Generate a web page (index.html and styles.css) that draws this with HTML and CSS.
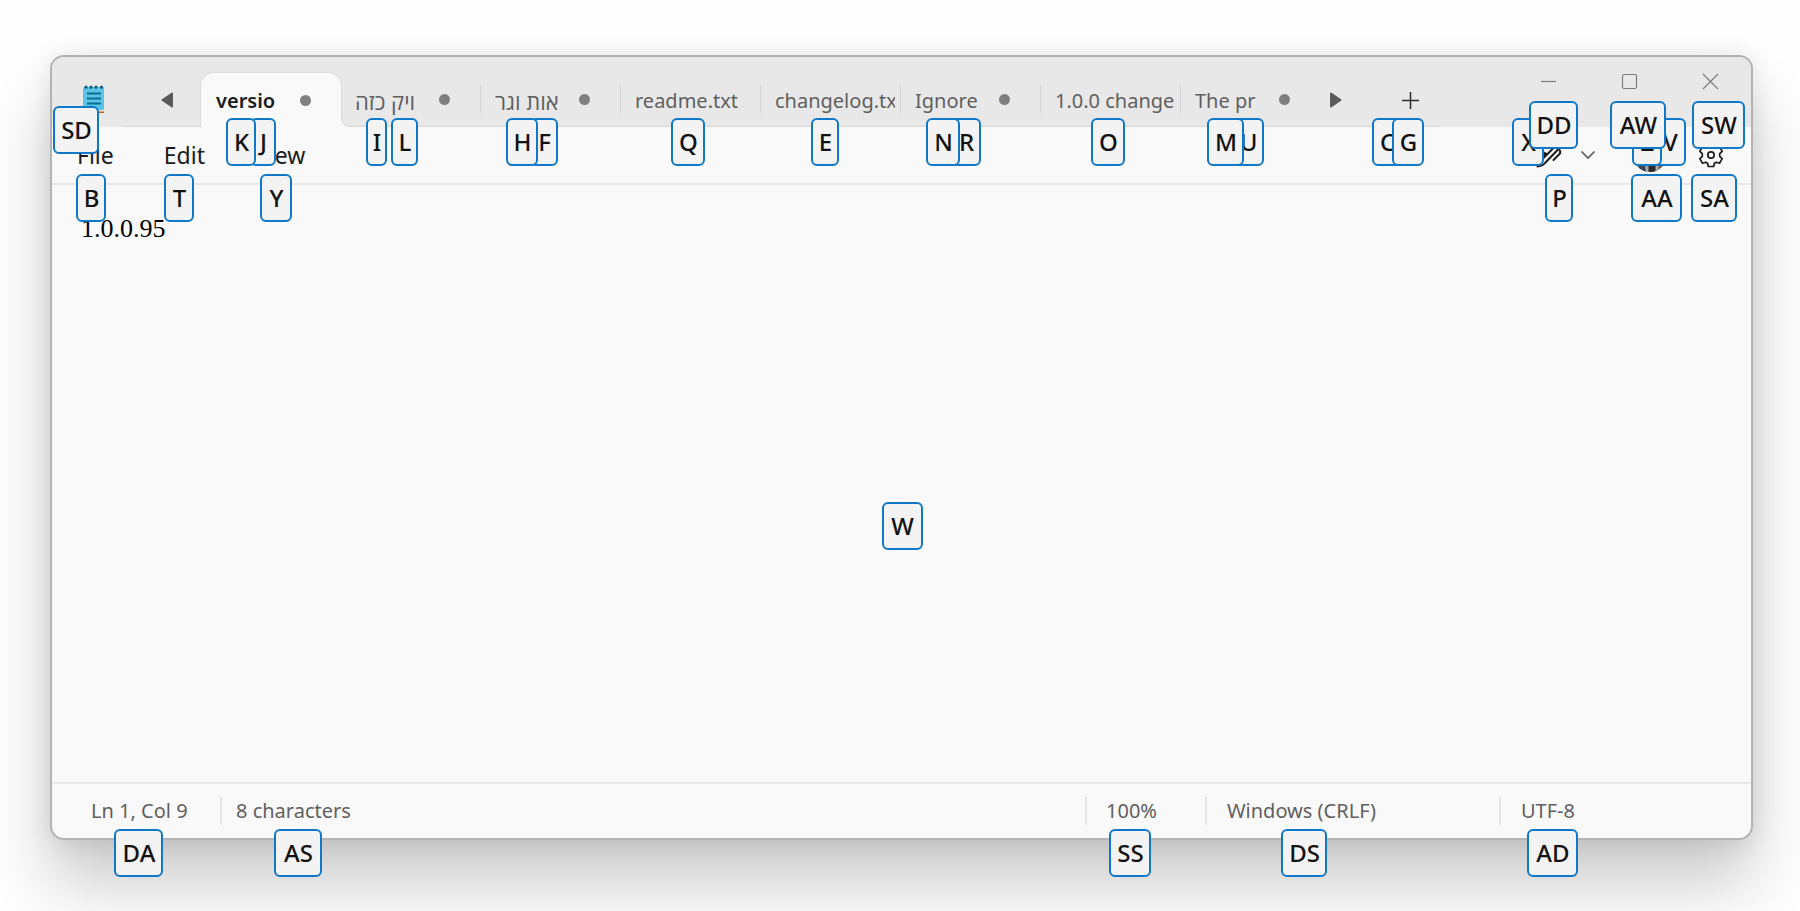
FILE: index.html
```html
<!DOCTYPE html>
<html lang="en">
<head>
<meta charset="utf-8">
<title>Notepad</title>
<link rel="stylesheet" href="styles.css">
</head>
<body>
<main class="window">
  <header class="titlebar">
    <div class="app-cell">
      <svg class="app-icon" width="22" height="30" viewBox="0 0 22 30" aria-hidden="true">
        <path d="M1 26h20v2H1z" fill="#b36b16"/>
        <path d="M1 24h20v2.500H1z" fill="#f4e3c8"/>
        <rect x="0" y="2" width="21" height="23" rx="1.500" fill="#5cc4e8"/>
        <g fill="#0f5f7d"><circle cx="3" cy="2.200" r="1.600"/><circle cx="8" cy="2.200" r="1.600"/><circle cx="13" cy="2.200" r="1.600"/><circle cx="18.500" cy="2.200" r="1.600"/></g>
        <path d="M4 8.500h14M4 13.500h14M4 18.500h14" stroke="#0b6e8e" stroke-width="2"/>
      </svg>
    </div>
    <div class="strip">
      <button class="scroll scroll-left" aria-label="Scroll tabs left"><svg width="13" height="16" viewBox="0 0 13 16"><path d="M1.500 8 11 1.500v13z" fill="#5b5b5b" stroke="#5b5b5b" stroke-width="2" stroke-linejoin="round"/></svg></button>
      <div class="tabs" role="tablist">
        <button class="tab active" role="tab" aria-selected="true"><span class="name">versio</span><span class="dot"></span></button>
        <button class="tab" role="tab"><span class="name" lang="he">ויק כזה</span><span class="dot"></span></button>
        <button class="tab" role="tab"><span class="name" lang="he">אות וגר</span><span class="dot"></span></button>
        <button class="tab" role="tab"><span class="name">readme.txt</span></button>
        <button class="tab" role="tab"><span class="name">changelog.txt</span></button>
        <button class="tab" role="tab"><span class="name">Ignore</span><span class="dot"></span></button>
        <button class="tab" role="tab"><span class="name">1.0.0 change</span></button>
        <button class="tab" role="tab"><span class="name">The pr</span><span class="dot"></span></button>
      </div>
      <button class="scroll scroll-right" aria-label="Scroll tabs right"><svg width="13" height="16" viewBox="0 0 13 16"><path d="M11.500 8 2 1.500v13z" fill="#5b5b5b" stroke="#5b5b5b" stroke-width="2" stroke-linejoin="round"/></svg></button>
      <button class="add" aria-label="New tab"><svg width="19" height="19" viewBox="0 0 19 19"><path d="M9.500 1v17M1 9.500h17" stroke="#2b2b2b" stroke-width="1.500"/></svg></button>
    </div>
    <div class="controls">
      <button aria-label="Minimize"><svg width="17" height="17" viewBox="0 0 17 17"><path d="M1 8.500h15"/></svg></button>
      <button aria-label="Maximize"><svg width="17" height="17" viewBox="0 0 17 17"><rect x="1.500" y="1.500" width="14" height="14" rx="1.500"/></svg></button>
      <button aria-label="Close"><svg width="17" height="17" viewBox="0 0 17 17"><path d="m1 1 15 15M16 1 1 16"/></svg></button>
    </div>
  </header>

  <nav class="menubar">
    <button>File</button>
    <button>Edit</button>
    <button>View</button>
    <div class="tools">
      <button class="pen" aria-label="Rewrite"><svg width="28" height="28" viewBox="0 0 28 28" fill="none" stroke="#1c1c1c" stroke-width="2" stroke-linecap="round" stroke-linejoin="round"><path d="M2.500 25.500 6 19.500 20 5.500c2-2 5 .5 3 3L10.500 21.500c-2 2.500-4.500 4-8 4z"/><path d="m18.500 19 6-6c1-1.200 1.200-2.500 0-4"/><path d="m9 11 3.500 2L9 15.500z" fill="#1c1c1c" stroke-width="1"/></svg></button>
      <button class="more" aria-label="More writing tools"><svg width="16" height="10" viewBox="0 0 16 10" fill="none" stroke="#5b5b5b" stroke-width="1.700"><path d="m1.500 1.500 6.500 6.500 6.500-6.500"/></svg></button>
      <button class="account" aria-label="Account"><svg width="34" height="34" viewBox="0 0 34 34"><defs><clipPath id="disc"><circle cx="17" cy="17" r="17"/></clipPath></defs><g clip-path="url(#disc)"><path fill="#6b625d" d="M0 0h34v34H0z"/><path fill="#3c4450" d="M6 22h5l2 12H6z"/><path fill="#aeb9c4" d="m12 24 2-1 1 11h-2z"/><path fill="#2e2a29" d="M16 22h6v12h-6z"/><path fill="#b5aba2" d="M23 22h3l-1 10h-2z"/></g></svg></button>
      <button class="settings" aria-label="Settings"><svg width="26" height="26" viewBox="0 0 26 26" fill="none" stroke="#1c1c1c" stroke-width="1.700" stroke-linejoin="round"><path d="M10.300 1.500h5.400l.7 3.200 1.900 1.100 3.200-1 2.700 4.600-2.500 2.300v2.600l2.500 2.300-2.700 4.600-3.200-1-1.900 1.100-.7 3.200h-5.400l-.7-3.200-1.900-1.100-3.200 1-2.700-4.600 2.500-2.300v-2.600L1.800 9.400l2.700-4.600 3.200 1 1.900-1.100z"/><circle cx="13" cy="13" r="3.200"/></svg></button>
    </div>
  </nav>

  <textarea class="editor" aria-label="Text editor" spellcheck="false">1.0.0.95</textarea>

  <footer class="status">
    <span class="cell position">Ln 1, Col 9</span>
    <span class="cell count">8 characters</span>
    <span class="cell zoom">100%</span>
    <span class="cell ending">Windows (CRLF)</span>
    <span class="cell encoding">UTF-8</span>
  </footer>

  <div class="hints">
    <kbd class="hint on-tabs h-j">J</kbd>
    <kbd class="hint on-tabs h-k">K</kbd>
    <kbd class="hint on-tabs h-i">I</kbd>
    <kbd class="hint on-tabs h-l">L</kbd>
    <kbd class="hint on-tabs h-f">F</kbd>
    <kbd class="hint on-tabs h-h">H</kbd>
    <kbd class="hint on-tabs h-q">Q</kbd>
    <kbd class="hint on-tabs h-e">E</kbd>
    <kbd class="hint on-tabs h-r">R</kbd>
    <kbd class="hint on-tabs h-n">N</kbd>
    <kbd class="hint on-tabs h-o">O</kbd>
    <kbd class="hint on-tabs h-u">U</kbd>
    <kbd class="hint on-tabs h-m">M</kbd>
    <kbd class="hint on-tabs h-c">C</kbd>
    <kbd class="hint on-tabs h-g">G</kbd>
    <kbd class="hint on-tabs h-x">X</kbd>
    <kbd class="hint on-tabs h-v">V</kbd>
    <kbd class="hint on-tabs h-z">Z</kbd>
    <kbd class="hint h-sd">SD</kbd>
    <kbd class="hint on-controls h-dd">DD</kbd>
    <kbd class="hint on-controls h-aw">AW</kbd>
    <kbd class="hint on-controls h-sw">SW</kbd>
    <kbd class="hint on-menu h-b">B</kbd>
    <kbd class="hint on-menu h-t">T</kbd>
    <kbd class="hint on-menu h-y">Y</kbd>
    <kbd class="hint on-menu h-p">P</kbd>
    <kbd class="hint on-menu h-aa">AA</kbd>
    <kbd class="hint on-menu h-sa">SA</kbd>
    <kbd class="hint h-w">W</kbd>
    <kbd class="hint on-status h-da">DA</kbd>
    <kbd class="hint on-status h-as">AS</kbd>
    <kbd class="hint on-status h-ss">SS</kbd>
    <kbd class="hint on-status h-ds">DS</kbd>
    <kbd class="hint on-status h-ad">AD</kbd>
  </div>
</main>
</body>
</html>
```
FILE: styles.css
```css
* { box-sizing: border-box; }

body {
  margin: 0;
  min-height: 100vh;
  padding: 55px 47px 71px 50px;
  display: flex;
  background: #fefefe;
  font-family: "Noto Sans", "Open Sans", sans-serif;
  color: #1b1b1b;
  overflow: hidden;
}

button {
  margin: 0;
  padding: 0;
  border: 0;
  background: none;
  font: inherit;
  color: inherit;
  display: flex;
  align-items: center;
  justify-content: center;
}

.window {
  position: relative;
  flex: 1;
  display: flex;
  flex-direction: column;
  border: 2px solid #b3b3b3;
  border-radius: 14px;
  background: #f9f9f9;
  box-shadow: 0 44px 64px rgba(0, 0, 0, 0.2), 0 2px 24px rgba(0, 0, 0, 0.1);
}

/* Title bar */
.titlebar {
  display: flex;
  height: 70px;
  background: #e8e8e8;
  border-radius: 12px 12px 0 0;
}
.app-cell {
  width: 70px;
  padding: 28px 0 0 31px;
}
.app-icon { display: block; }
.strip {
  display: flex;
  align-items: flex-end;
  border-bottom: 1px solid #d6d6d6;
}
.scroll, .add { height: 52px; }
.scroll-left { width: 67px; margin-left: 12px; }
.scroll-right { width: 28px; }
.add { width: 60px; margin-left: 31px; }
.tabs { display: flex; margin-bottom: -1px; }
.tab {
  position: relative;
  width: 140px;
  height: 55px;
  padding: 2px 6px 0 14px;
  justify-content: flex-start;
  font-size: 20px;
  line-height: 28px;
  color: #5f5f5f;
}
.tab::after {
  content: "";
  position: absolute;
  right: 0;
  top: 13px;
  width: 1px;
  height: 28px;
  background: #d4d4d4;
}
.tab:last-child::after { display: none; }
.tab.active {
  width: 142px;
  margin: 0 -1px;
  padding-left: 15px;
  background: #f9f9f9;
  border: 1px solid #dcdcdc;
  border-bottom: 0;
  border-radius: 14px 14px 0 0;
  font-weight: 600;
  color: #1b1b1b;
}
.tab.active::after {
  right: -9px;
  top: auto;
  bottom: 0;
  width: 9px;
  height: 9px;
  background: radial-gradient(circle at 100% 0, #e8e8e8 8px, #d6d6d6 8px, #d6d6d6 9px, #f9f9f9 9px);
}
.name {
  flex: 0 1 auto;
  overflow: hidden;
  white-space: nowrap;
  text-align: left;
}
.name:lang(he) { font-size: 22px; }
.tab:has(.dot) .name { flex: 0 0 63px; }
.dot {
  width: 11px;
  height: 11px;
  margin: 0 0 2px 21px;
  border-radius: 50%;
  background: #808080;
}
.controls {
  display: flex;
  margin-left: auto;
}
.controls button { width: 81px; height: 48px; }
.controls svg { fill: none; stroke: #7d7d7d; stroke-width: 1.2; }

/* Menu bar */
.menubar {
  display: flex;
  align-items: center;
  gap: 50px;
  height: 58px;
  padding-left: 25px;
  border-bottom: 2px solid #e8e8e8;
  font-size: 23px;
  line-height: 32px;
}
.tools {
  display: flex;
  align-items: center;
  margin-left: auto;
}
.tools button { height: 48px; }
.pen { width: 48px; }
.more { width: 30px; }
.account { width: 42px; margin-left: 26px; }
.settings { width: 80px; }

/* Editor */
.editor {
  flex: 1;
  min-height: 200px;
  padding: 28px 29px;
  border: 0;
  outline: 0;
  resize: none;
  background: #f9f9f9;
  color: #000;
  font-family: "Liberation Serif", serif;
  font-size: 26px;
  line-height: 32px;
}

/* Status bar */
.status {
  display: flex;
  align-items: center;
  height: 56px;
  border-top: 2px solid #e8e8e8;
  color: #5f5f5f;
  font-size: 20px;
  line-height: 28px;
}
.cell { padding-left: 20px; white-space: nowrap; }
.cell + .cell { border-left: 2px solid #e4e4e4; }
.position { width: 168px; padding-left: 39px; }
.count { flex: 1; padding-left: 14px; }
.zoom { width: 120px; padding-left: 19px; }
.ending { width: 294px; }
.encoding { width: 252px; }

/* Keyboard hints float over the controls that they trigger */
.hint {
  position: absolute;
  width: 30px;
  height: 48px;
  padding-left: 1px;
  display: flex;
  align-items: center;
  justify-content: center;
  border: 2px solid #0f78c8;
  border-radius: 6px;
  background: #f3f3f3;
  font-family: "Noto Sans", "Open Sans", sans-serif;
  font-size: 24px;
  font-weight: 500;
  line-height: 32px;
  color: #111;
}
.on-tabs { top: 61px; }
.on-controls { top: 44px; }
.on-menu { top: 117px; }
.on-status { bottom: -39px; }

.h-sd { left: 1px; top: 49px; width: 46px; }
.h-b { left: 24px; }
.h-t { left: 112px; }
.h-y { left: 208px; width: 32px; }
.h-k { left: 174px; }
.h-j { left: 198px; width: 26px; }
.h-i { left: 314px; width: 21px; }
.h-l { left: 339px; width: 27px; }
.h-h { left: 454px; width: 32px; }
.h-f { left: 478px; width: 28px; }
.h-q { left: 619px; width: 34px; }
.h-e { left: 759px; width: 28px; }
.h-n { left: 874px; width: 34px; }
.h-r { left: 899px; }
.h-o { left: 1039px; width: 34px; }
.h-m { left: 1155px; width: 37px; }
.h-u { left: 1180px; width: 32px; }
.h-c { left: 1320px; }
.h-g { left: 1340px; width: 32px; }
.h-x { right: 207px; width: 32px; }
.h-dd { right: 173px; width: 49px; }
.h-p { right: 178px; width: 28px; }
.h-z { right: 89px; }
.h-v { right: 65px; width: 32px; }
.h-aw { right: 85px; width: 56px; }
.h-aa { right: 69px; width: 51px; }
.h-sw { right: 6px; width: 53px; }
.h-sa { right: 14px; width: 46px; }
.h-w { left: calc(50% - 20px); top: calc(50% + 54px); width: 41px; }
.h-da { left: 62px; width: 49px; }
.h-as { left: 222px; width: 48px; }
.h-ss { right: 600px; width: 42px; }
.h-ds { right: 424px; width: 46px; }
.h-ad { right: 173px; width: 51px; }
```
